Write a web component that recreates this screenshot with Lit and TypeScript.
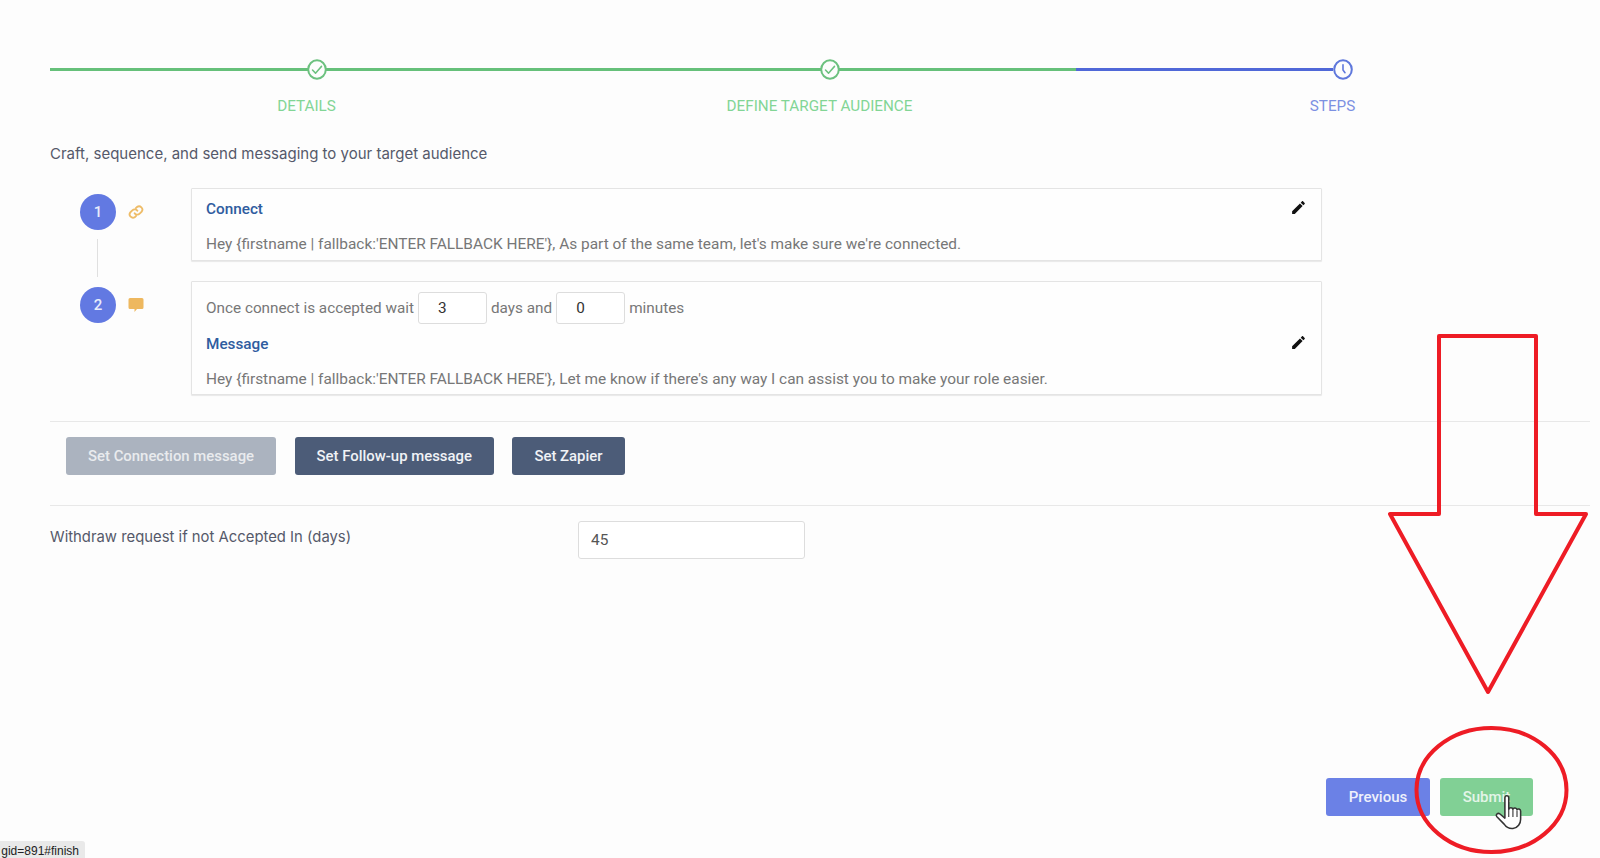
import { LitElement, html, css, svg } from "lit";
import { customElement } from "lit/decorators.js";

const check = svg`<path d="M5.5 10.5l3 3 6-6.5" fill="none" stroke="#6cc17f" stroke-width="1.5" stroke-linecap="round" stroke-linejoin="round"/>`;
const clock = svg`<path d="M10 5.5V10.5l2 2.5" fill="none" stroke="#5f78dc" stroke-width="1.6" stroke-linecap="round" stroke-linejoin="round"/>`;
const pencil = html`<svg class="edit" viewBox="0 0 24 24"><path d="M3 17.25V21h3.75L17.81 9.94l-3.75-3.75L3 17.25zM20.71 7.04c.39-.39.39-1.02 0-1.41l-2.34-2.34c-.39-.39-1.02-.39-1.41 0l-1.83 1.83 3.75 3.75 1.83-1.83z"/></svg>`;

@customElement("app-root")
export class AppRoot extends LitElement {
  static styles = css`
    :host { display: block; position: relative; width: 1600px; height: 858px; overflow: hidden; background: #fdfdfd; font-family: Roboto, sans-serif; color: #777; font-size: 15.42px; }
    .page { padding: 59px 0 0 50px; display: flex; flex-direction: column; }
    .wizard { display: grid; grid-template-columns: repeat(3, 513px); }
    .col { display: flex; flex-direction: column; }
    .track { position: relative; height: 21px; display: flex; align-items: center; }
    .track .line { height: 3px; flex: 1; background: #66c07a; }
    .blue .line { background: #5068d8; margin-right: 256px; }
    .node { position: absolute; top: 0; width: 20px; height: 21px; }
    .n1 { left: 257px; }
    .n2 { left: 257px; }
    .n3 { left: 257px; }
    .lab { text-align: center; margin-top: 18px; font-size: 15.25px; line-height: 16px; color: #82d595; }
    .blue .lab { color: #7c90e2; }
    .intro { margin-top: 30px; font-family: Inter, sans-serif; font-size: 15px; line-height: 20px; color: #55596a; }
    .seq { display: flex; flex-direction: column; gap: 20px; margin-top: 24px; width: 1272px; }
    .item { display: flex; }
    .gutter { width: 141px; flex: none; padding: 6px 0 0 30px; box-sizing: border-box; display: flex; position: relative; }
    .num { width: 36px; height: 36px; border-radius: 50%; background: #6279e2; color: #e8ecfb; font-size: 15px; font-weight: 500; display: flex; align-items: center; justify-content: center; }
    .gicon { width: 16px; height: 16px; margin: 10px 0 0 12px; }
    .conn { position: absolute; left: 47px; top: 51px; width: 1px; height: 38px; background: #e0e0e0; }
    .card { flex: 1; border: 1px solid #e4e4e4; box-shadow: 0 1px 1px #e8e8e8; padding: 10px 14px 6px; position: relative; background: #fefefe; border-radius: 1px; }
    .title { color: #2f5c9f; font-weight: 500; font-size: 15.3px; line-height: 20px; }
    .body { line-height: 20px; margin-top: 15px; color: #777; }
    .edit { position: absolute; right: 14px; top: 10px; width: 17px; height: 17px; fill: #111; }
    .card.two { padding: 10px 14px 5px; }
    .card.two .edit { top: 52px; }
    .wait { display: flex; align-items: center; gap: 4px; line-height: 20px; font-size: 15.3px; }
    input { font: inherit; box-sizing: border-box; border: 1px solid #ddd; border-radius: 3px; background: #fff; color: #333; outline: none; }
    .small { width: 69px; height: 32px; padding: 0 0 0 19px; }
    .two .title { margin-top: 10px; }
    hr { border: 0; height: 1px; background: #e8e8e8; margin: 0; width: 1540px; }
    .hr1 { margin-top: 26px; }
    .btns { display: flex; gap: 18.5px; padding: 15px 0 30px 16px; }
    .btn { border: 0; border-radius: 3px; height: 38px; padding: 0 22px; font: 500 14.9px Roboto, sans-serif; color: #f0f2f6; background: #4c5c78; }
    .btn.off { background: #abb3bf; color: #e9ebee; }
    .withdraw { display: flex; margin-top: 15px; }
    .withdraw label { width: 528px; font-family: Inter, sans-serif; font-size: 14.85px; color: #55596a; line-height: 20px; margin-top: 6px; }
    .big { width: 227px; height: 38px; padding-left: 12px; color: #555; }
    .actions { display: flex; gap: 10px; justify-content: flex-end; width: 1483px; margin-top: 219px; }
    .act { border: 0; border-radius: 3px; height: 38px; font: 500 15px Roboto, sans-serif; color: #eef0fb; }
    .prev { width: 104px; background: #6b81e6; }
    .sub { width: 93px; background: #81d095; color: #e4f5e8; }
    .marks { position: absolute; inset: 0; width: 1600px; height: 858px; pointer-events: none; }
    .status { position: absolute; left: 0; bottom: 0; width: 85px; height: 17px; overflow: hidden; background: #e9e9e9; border-top-right-radius: 3px; font: 12px "Liberation Sans", sans-serif; color: #222; line-height: 21px; white-space: nowrap; text-align: right; padding-right: 6px; box-sizing: border-box; }
  `;

  render() {
    return html`
      <div class="page">
        <div class="wizard">
          <div class="col">
            <div class="track"><div class="line"></div><svg class="node n1" viewBox="0 0 20 20" preserveAspectRatio="none"><circle cx="10" cy="10" r="8.8" fill="#fdfdfd" stroke="#6cc17f" stroke-width="2"/>${check}</svg></div>
            <div class="lab">DETAILS</div>
          </div>
          <div class="col">
            <div class="track"><div class="line"></div><svg class="node n2" viewBox="0 0 20 20" preserveAspectRatio="none"><circle cx="10" cy="10" r="8.8" fill="#fdfdfd" stroke="#6cc17f" stroke-width="2"/>${check}</svg></div>
            <div class="lab">DEFINE TARGET AUDIENCE</div>
          </div>
          <div class="col blue">
            <div class="track"><div class="line"></div><svg class="node n3" viewBox="0 0 20 20" preserveAspectRatio="none"><circle cx="10" cy="10" r="8.8" fill="#fdfdfd" stroke="#5f78dc" stroke-width="2"/>${clock}</svg></div>
            <div class="lab">STEPS</div>
          </div>
        </div>
        <div class="intro">Craft, sequence, and send messaging to your target audience</div>
        <div class="seq">
          <div class="item">
            <div class="gutter">
              <div class="num">1</div>
              <svg class="gicon" viewBox="0 0 24 24" fill="none" stroke="#eebc68" stroke-width="2.8" stroke-linecap="round"><path d="M10 14a5 5 0 0 0 7.5.5l3-3a5 5 0 0 0-7-7l-1.7 1.7"/><path d="M14 10a5 5 0 0 0-7.5-.5l-3 3a5 5 0 0 0 7 7l1.7-1.7"/></svg>
              <div class="conn"></div>
            </div>
            <div class="card">
              <div class="title">Connect</div>
              <div class="body">Hey {firstname | fallback:'ENTER FALLBACK HERE'}, As part of the same team, let's make sure we're connected.</div>
              ${pencil}
            </div>
          </div>
          <div class="item">
            <div class="gutter">
              <div class="num">2</div>
              <svg class="gicon" viewBox="0 0 16 16"><path d="M2 1h12a1.5 1.5 0 0 1 1.5 1.5v8a1.5 1.5 0 0 1-1.5 1.5H9l-2.5 3V12H2a1.5 1.5 0 0 1-1.5-1.5v-8A1.5 1.5 0 0 1 2 1z" fill="#eeb85f"/></svg>
            </div>
            <div class="card two">
              <div class="wait">Once connect is accepted wait <input class="small" value="3"> days and <input class="small" value="0"> minutes</div>
              <div class="title">Message</div>
              <div class="body">Hey {firstname | fallback:'ENTER FALLBACK HERE'}, Let me know if there's any way I can assist you to make your role easier.</div>
              ${pencil}
            </div>
          </div>
        </div>
        <hr class="hr1">
        <div class="btns">
          <button class="btn off">Set Connection message</button>
          <button class="btn">Set Follow-up message</button>
          <button class="btn">Set Zapier</button>
        </div>
        <hr>
        <div class="withdraw">
          <label>Withdraw request if not Accepted In (days)</label>
          <input class="big" value="45">
        </div>
        <div class="actions">
          <button class="act prev">Previous</button>
          <button class="act sub">Submit</button>
        </div>
      </div>
      <svg class="marks" viewBox="0 0 1600 858">
        <path d="M1439 336H1536V514H1586L1488 692L1390 514H1439Z" fill="none" stroke="#ee1c25" stroke-width="4" stroke-linejoin="round"/>
        <ellipse cx="1491.5" cy="790" rx="75" ry="62" fill="none" stroke="#ee1c25" stroke-width="4"/>
        <g transform="translate(1495 795) scale(1.1)">
          <path d="M9 2.5c0-2.5 3.5-2.5 3.5 0V13c.5-2 3.5-2 3.8 0 .5-1.7 3.4-1.5 3.7.4.7-1.3 3.2-.8 3.3 1.2V22c0 4-2.5 8-7 8.5-3.5.3-6-1-8-4L1.5 19.5c-1.2-2 1.2-3.7 3-2.2L9 21Z" fill="#fff" stroke="#333" stroke-width="1.4" stroke-linejoin="round"/>
          <path d="M12.5 13v7M16.3 13.5V20M20 14v6" stroke="#333" stroke-width="1" fill="none"/>
        </g>
      </svg>
      <div class="status">gid=891#finish</div>
    `;
  }
}
